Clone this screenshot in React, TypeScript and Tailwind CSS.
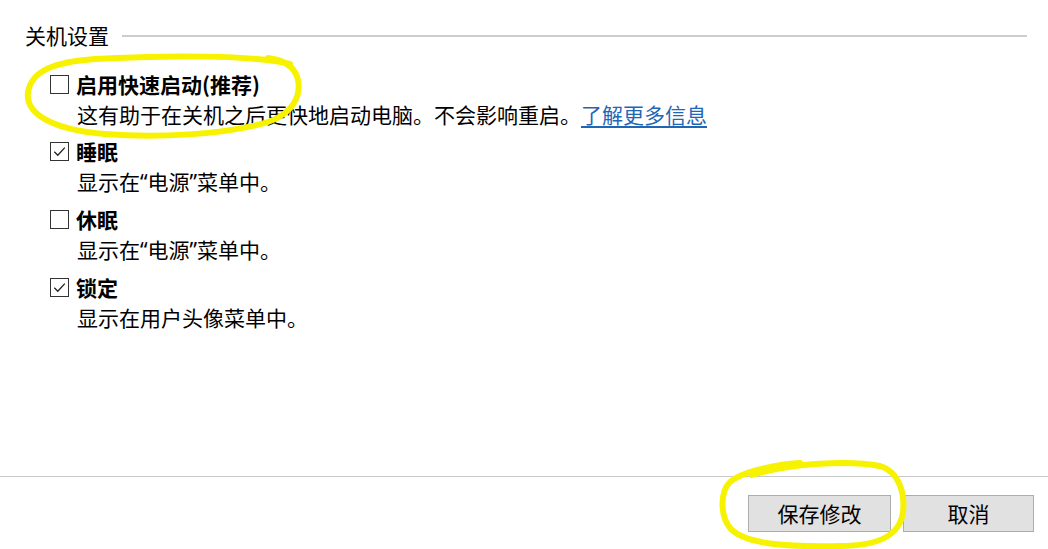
import React from "react";

const Q = ({ c }: { c: string }) => (
  <span style={{ fontFamily: '"Noto Sans", sans-serif' }}>{c}</span>
);

const items = [
  {
    label: "启用快速启动(推荐)",
    desc: <>这有助于在关机之后更快地启动电脑。不会影响重启。</>,
    link: "了解更多信息",
    checked: false,
  },
  {
    label: "睡眠",
    desc: (
      <>
        显示在<Q c="“" />电源<Q c="”" />菜单中。
      </>
    ),
    checked: true,
  },
  {
    label: "休眠",
    desc: (
      <>
        显示在<Q c="“" />电源<Q c="”" />菜单中。
      </>
    ),
    checked: false,
  },
  { label: "锁定", desc: <>显示在用户头像菜单中。</>, checked: true },
];

function Checkbox({ checked }: { checked: boolean }) {
  return (
    <span className="flex h-[19px] w-[19px] flex-none items-center justify-center border border-[#333] bg-white">
      {checked && (
        <svg width="17" height="17" viewBox="0 0 17 17">
          <polyline
            points="3.3,8.8 6.8,12.3 13.8,4.6"
            fill="none"
            stroke="#222"
            strokeWidth="1.3"
          />
        </svg>
      )}
    </span>
  );
}

export default function App() {
  return (
    <div
      className="relative flex h-[549px] w-[1048px] flex-col overflow-hidden bg-white text-black"
      style={{ fontFamily: '"Noto Sans CJK SC", "Noto Sans", sans-serif' }}
    >
      {/* content */}
      <div className="flex-1 pt-[20px]">
        <div className="flex items-center pl-[25px] pr-[21px]">
          <span className="text-[21px] leading-[30px]">关机设置</span>
          <div className="ml-[13px] mt-[2px] h-[2px] flex-1 bg-[#cdcdcd]" />
        </div>

        <div className="mt-[19px] flex flex-col gap-[7px] pl-[50px]">
          {items.map((it) => (
            <div key={it.label}>
              <div className="flex items-center gap-[7px]">
                <Checkbox checked={it.checked} />
                <span className="text-[21px] font-bold leading-[30px]">
                  {it.label}
                </span>
              </div>
              <div className="pl-[27px] text-[21px] leading-[30px]">
                {it.desc}
                {it.link && (
                  <span className="text-[#1f67b5] underline underline-offset-[3px]">
                    {it.link}
                  </span>
                )}
              </div>
            </div>
          ))}
        </div>
      </div>

      {/* footer */}
      <div className="h-[73px] border-t border-[#c9c9c9]">
        <div className="flex justify-end gap-[12px] pr-[14px] pt-[18px]">
          <button className="h-[37px] w-[143px] border border-[#adadad] bg-[#e1e1e1] text-[21px] leading-none">
            保存修改
          </button>
          <button className="h-[37px] w-[131px] border border-[#adadad] bg-[#e1e1e1] text-[21px] leading-none">
            取消
          </button>
        </div>
      </div>

      {/* hand-drawn highlight marks */}
      <svg
        className="pointer-events-none absolute inset-0"
        width="1048"
        height="549"
        viewBox="0 0 1048 549"
      >
        <path
          d="M290 64 C255 55 165 55 95 59 C55 62 32 70 28 92 C25 115 55 130 105 134 C155 138 225 135 268 122 C294 113 301 95 298 80 C295 66 284 60 268 58"
          fill="none"
          stroke="#f7f200"
          strokeWidth="6"
          strokeLinecap="round"
        />
        <path
          d="M752 475 C790 463 850 460 880 466 C900 472 905 495 903 512 C900 535 880 546 840 546 C790 547 745 545 730 528 C720 515 720 492 730 482 C740 473 770 465 800 463"
          fill="none"
          stroke="#f7f200"
          strokeWidth="6"
          strokeLinecap="round"
        />
      </svg>
    </div>
  );
}
